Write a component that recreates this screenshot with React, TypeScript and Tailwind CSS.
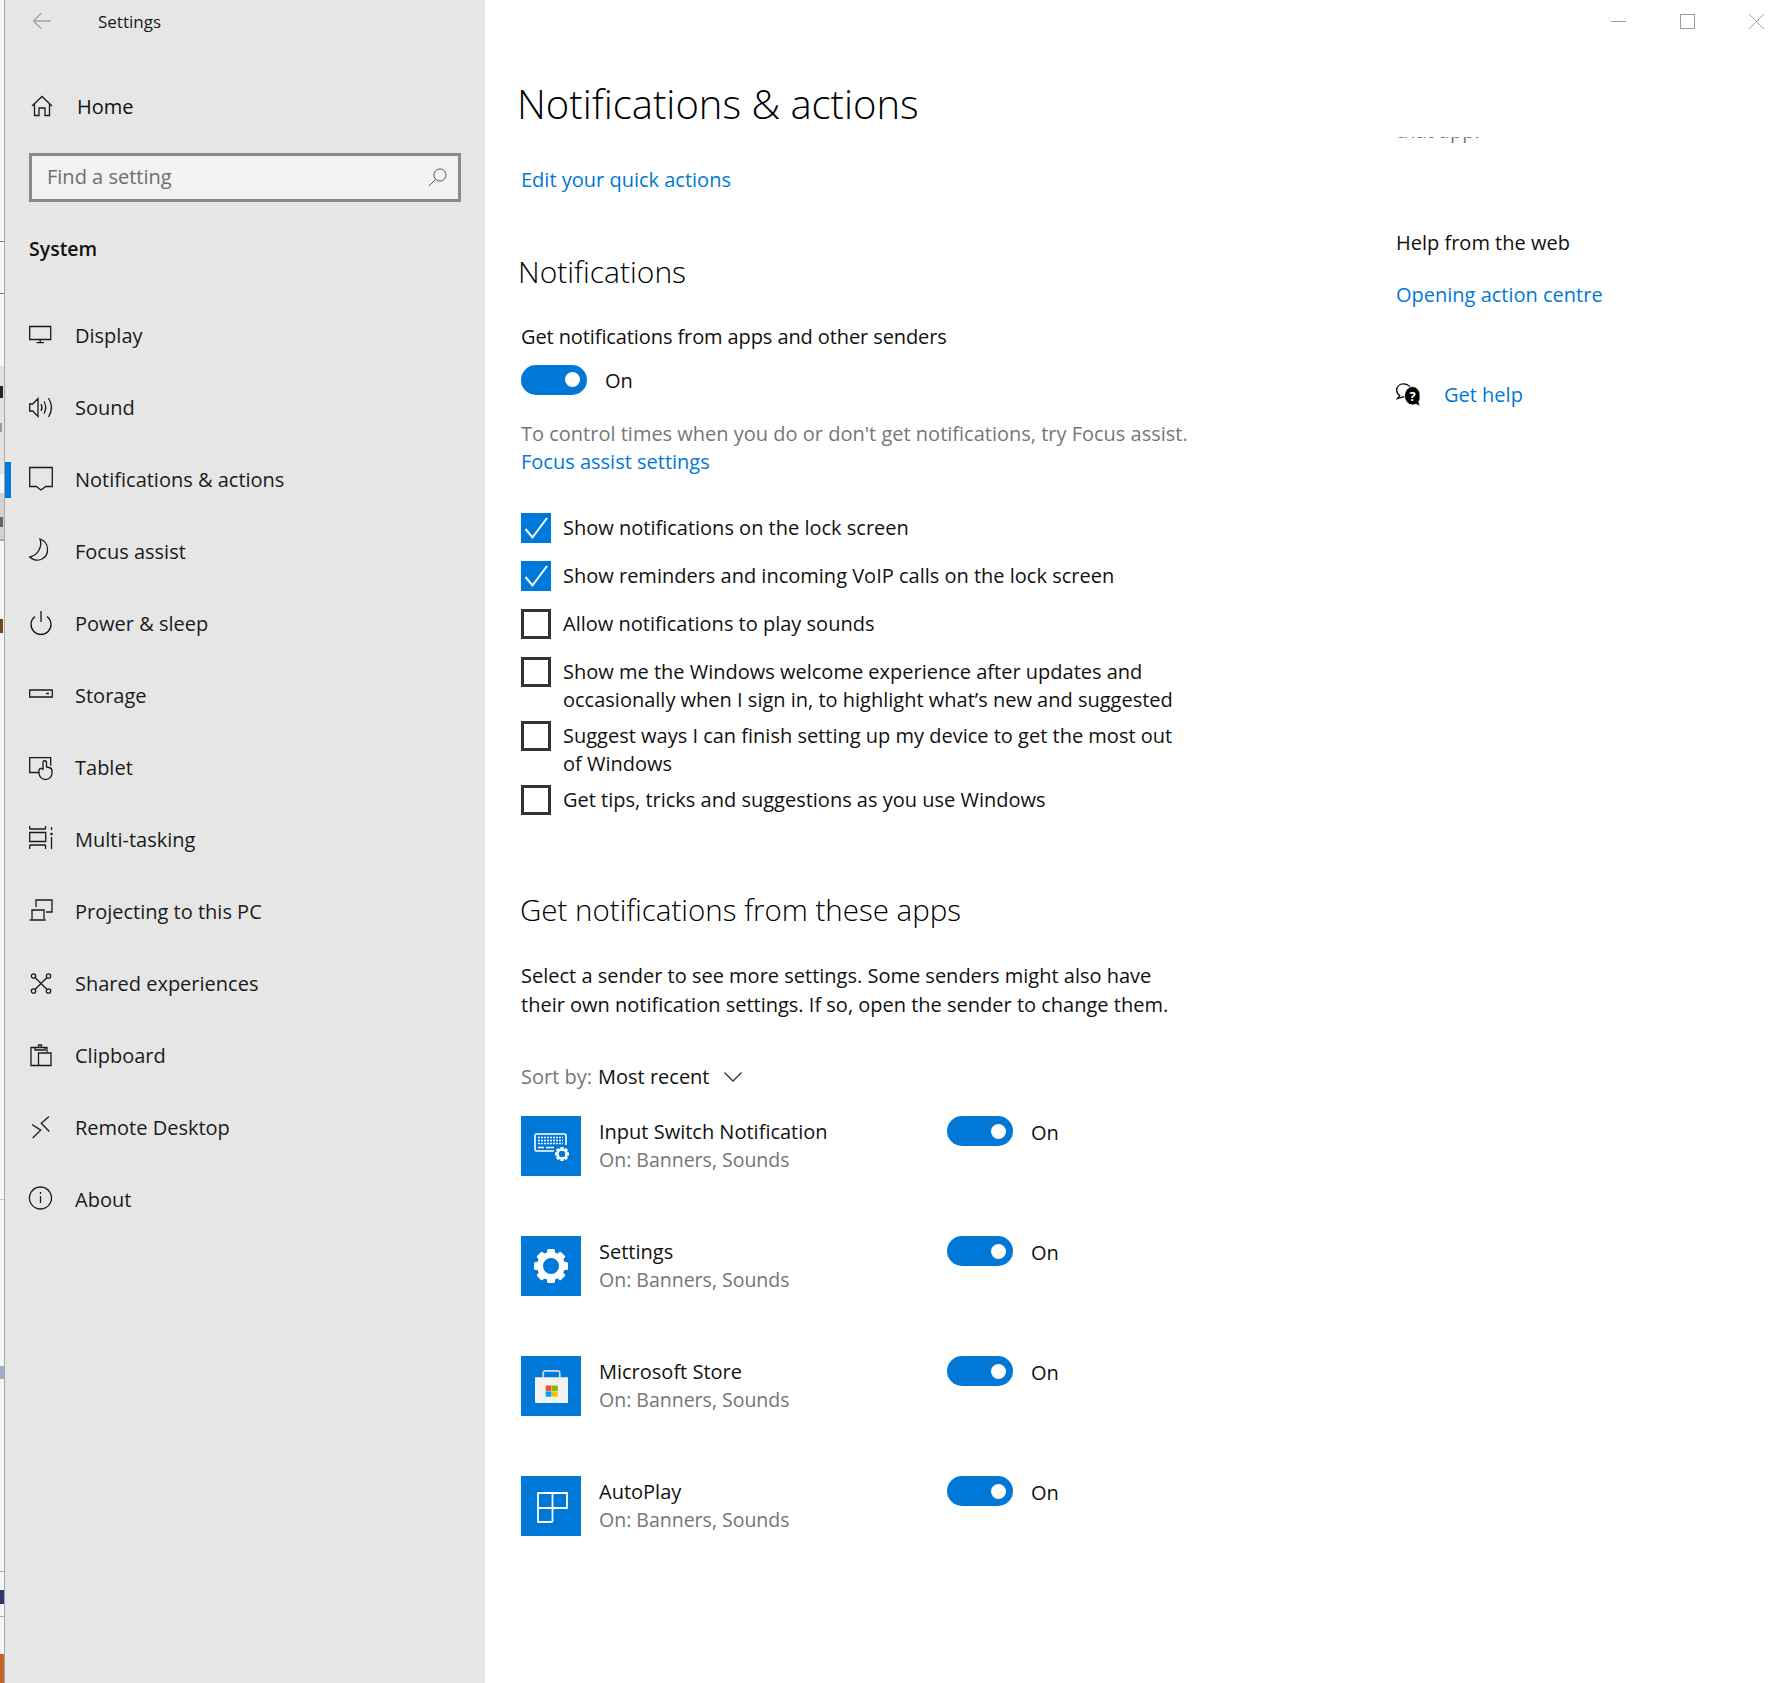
const font = "font-['Open_Sans','Noto_Sans',sans-serif]";

const navItems = [
    { label: 'Display', icon: 'display' },
    { label: 'Sound', icon: 'sound' },
    { label: 'Notifications & actions', icon: 'notify', active: true },
    { label: 'Focus assist', icon: 'focus' },
    { label: 'Power & sleep', icon: 'power' },
    { label: 'Storage', icon: 'storage' },
    { label: 'Tablet', icon: 'tablet' },
    { label: 'Multi-tasking', icon: 'multi' },
    { label: 'Projecting to this PC', icon: 'project' },
    { label: 'Shared experiences', icon: 'shared' },
    { label: 'Clipboard', icon: 'clipboard' },
    { label: 'Remote Desktop', icon: 'remote' },
    { label: 'About', icon: 'about' },
];

const checks = [
    { lines: ['Show notifications on the lock screen'], on: true },
    { lines: ['Show reminders and incoming VoIP calls on the lock screen'], on: true },
    { lines: ['Allow notifications to play sounds'] },
    { lines: ['Show me the Windows welcome experience after updates and', 'occasionally when I sign in, to highlight what\u2019s new and suggested'] },
    { lines: ['Suggest ways I can finish setting up my device to get the most out', 'of Windows'] },
    { lines: ['Get tips, tricks and suggestions as you use Windows'] },
];

const apps = [
    { name: 'Input Switch Notification', kind: 'input' },
    { name: 'Settings', kind: 'settings' },
    { name: 'Microsoft Store', kind: 'store' },
    { name: 'AutoPlay', kind: 'autoplay' },
];

function NavIcon({ name }: { name: string }) {
    return (
        <svg className="w-6 h-6 shrink-0 mb-[5px] overflow-visible" viewBox="0 0 24 24" fill="none" stroke="#1a1a1a" strokeWidth={1.3}>
            {name === 'display' && <path d="M.7 4.500h21v13H.7zM11.200 17.500v3M7.500 20.700h7.500" />}
            {name === 'sound' && <path d="M.7 10h3l5.300-5.500v18L3.700 17H.7zM12 10a7 7 0 0 1 0 7M15 7.500a12 12 0 0 1 0 12M19.500 4a18 18 0 0 1 0 19" />}
            {name === 'notify' && <path d="M.7 1.500h22.600v19h-6.500l-4.800 3.500-4.800-3.500H.7z" />}
            {name === 'focus' && <path d="M11 1a11 11 0 0 1 1 20.500A11 11 0 0 1 .8 19 A14 14 0 0 0 11 1z" />}
            {name === 'power' && <path d="M6 6.500a10 10 0 1 0 12 0M12 1v11" />}
            {name === 'storage' && <path d="M.7 8h22.600v7H.7zM17 11.500h3" />}
            {name === 'tablet' && (
                <g transform="translate(0 3)">
                    <path d="M10 15.500H.7V.7h21v8" />
                    <path d="M14 11V5.500a1.700 1.700 0 0 1 3.500 0V10l2.500.5a3.500 3.500 0 0 1 3 3.500v2a6.500 6.500 0 0 1-13 0V14a2 2 0 0 1 4-1z" />
                </g>
            )}
            {name === 'multi' && (
                <>
                    <path d="M.7 3h16M.7 0v3M16.500 0v3M.7 6.500h16v9H.7zM.7 19h16M.7 19v4M16.500 19v4M22.500 1v3M22.500 11v12" />
                    <circle cx="22.500" cy="8" r="1.300" fill="#1a1a1a" stroke="none" />
                </>
            )}
            {name === 'project' && <path d="M7 9V2h16v12H17M3 21V12h12v9M.7 22h16" />}
            {name === 'shared' && (
                <>
                    <path d="M6 7.500L18 19.500M18 7.500L6 19.500" />
                    <circle cx="4.500" cy="6" r="2.200" />
                    <circle cx="19.500" cy="6" r="2.200" />
                    <circle cx="4.500" cy="21" r="2.200" />
                    <circle cx="19.500" cy="21" r="2.200" />
                </>
            )}
            {name === 'clipboard' && <path d="M9 23.500H2V5.500h16V10M6 8V5.500h3.500V3h3v2.500H16V8zM9.500 11H22v12.500H9.500z" />}
            {name === 'remote' && <path d="M3 10.500l8.700 5.700-8 7.800M20 2.500l-7.700 6.700 8 8.300" />}
            {name === 'about' && <path d="M11.500 1a11 11 0 1 1-.1 0zM11.500 10v7M11.500 6v2" />}
        </svg>
    );
}

function Gear({ className }: { className: string }) {
    return (
        <svg className={className} viewBox="0 0 34 34" fill="white">
            <circle cx="17" cy="17" r="11" fill="none" stroke="white" strokeWidth={6} />
            {[0, 45, 90, 135, 180, 225, 270, 315].map((a) => (
                <rect key={a} x="13" y="0" width="8" height="7" rx="1.500" transform={`rotate(${a} 17 17)`} />
            ))}
        </svg>
    );
}

function Toggle() {
    return (
        <div className="flex items-center justify-end w-[66px] h-[30px] rounded-full bg-[#0078d7] pr-[7px] shrink-0">
            <div className="w-[15px] h-[15px] rounded-full bg-white" />
        </div>
    );
}

function CheckRow({ lines, on }: { lines: string[]; on?: boolean }) {
    return (
        <div className={`flex items-start gap-[12px] ${lines.length > 1 ? 'mb-[7px]' : 'mb-[18px]'}`}>
            {on ? (
                <div className="w-[30px] h-[30px] bg-[#0078d7] flex items-center justify-center shrink-0">
                    <svg className="w-[24px] h-[24px]" viewBox="0 0 24 24" fill="none" stroke="white" strokeWidth={2}>
                        <path d="M1.500 13l7 8.500L23 2" />
                    </svg>
                </div>
            ) : (
                <div className="w-[30px] h-[30px] border-[3px] border-[#333333] shrink-0" />
            )}
            <div className="text-[20px] leading-[28px] mt-px whitespace-nowrap text-[#111]">
                {lines.map((l) => (
                    <div key={l}>{l}</div>
                ))}
            </div>
        </div>
    );
}

function AppIcon({ kind }: { kind: string }) {
    return (
        <div className="w-[60px] h-[60px] bg-[#0078d7] flex items-center justify-center shrink-0 relative">
            {kind === 'input' && (
                <>
                    <svg className="absolute left-[13px] top-[17px] w-[33px] h-[20px]" viewBox="0 0 33 20" fill="none" stroke="white" strokeWidth={1.600}>
                        <path d="M30 18H2.500A1.500 1.500 0 0 1 1 16.500V2.500A1.500 1.500 0 0 1 2.500 1h28A1.500 1.500 0 0 1 32 2.500V12" />
                        <path d="M4 4.500h25M4 7.500h25M4 10.500h25" strokeDasharray="2 1" />
                        <path d="M4 14.500h6M12 14.500h11" />
                    </svg>
                    <div className="absolute left-[33px] top-[30px] w-[16px] h-[16px] bg-[#0078d7] flex items-center justify-center">
                        <Gear className="w-[14px] h-[14px]" />
                    </div>
                </>
            )}
            {kind === 'settings' && <Gear className="w-[34px] h-[34px]" />}
            {kind === 'store' && (
                <svg className="w-[33px] h-[33px]" viewBox="0 0 34 34">
                    <path d="M8.500 8V3a2 2 0 0 1 2-2h13a2 2 0 0 1 2 2v5" fill="none" stroke="#d8d8d8" strokeWidth={1.800} />
                    <path d="M0 7.500h34V33a1 1 0 0 1-1 1H1a1 1 0 0 1-1-1z" fill="#f2f2f2" />
                    <rect x="11" y="16" width="6" height="5.500" fill="#f25022" />
                    <rect x="17.500" y="16" width="6" height="5.500" fill="#7fba00" />
                    <rect x="11" y="22" width="6" height="5.500" fill="#00a4ef" />
                    <rect x="17.500" y="22" width="6" height="5.500" fill="#ffb900" />
                </svg>
            )}
            {kind === 'autoplay' && (
                <svg className="w-[31px] h-[31px] ml-[3px] mt-[2px]" viewBox="0 0 31 31" fill="none" stroke="white" strokeWidth={1.800}>
                    <path d="M1 1h29v15H1zM15.500 1v29M1 16v14h14.500" />
                </svg>
            )}
        </div>
    );
}

export default function App() {
    return (
        <div className={`${font} flex w-[1786px] h-[1683px] overflow-hidden bg-white text-[#111]`}>
            {/* sliver of the window behind */}
            <div className="w-[5px] h-full flex flex-col border-r border-[#a6a6a6] bg-[#f6f6f6] shrink-0">
                <div className="h-[241px]" />
                <div className="h-px bg-[#808080]" />
                <div className="h-[51px]" />
                <div className="h-px bg-[#808080]" />
                <div className="h-[72px]" />
                <div className="h-[108px] bg-[#e2e2e2] flex flex-col">
                    <div className="h-[20px]" />
                    <div className="h-[12px] w-[3px] bg-[#222]" />
                    <div className="h-[25px]" />
                    <div className="h-[9px] w-[2px] bg-[#999]" />
                </div>
                <div className="h-[19px]" />
                <div className="h-[48px] bg-[#d2d2d2] border-b-2 border-[#aaa] flex flex-col">
                    <div className="h-[24px]" />
                    <div className="h-[10px] w-[3px] bg-[#666]" />
                </div>
                <div className="h-[78px]" />
                <div className="h-[14px] w-[3px] bg-[#6b4a20]" />
                <div className="h-[566px]" />
                <div className="h-px bg-[#c8c8c8]" />
                <div className="h-[166px]" />
                <div className="h-[13px] w-[4px] bg-[#9bb0c4]" />
                <div className="h-[192px]" />
                <div className="h-px bg-[#b0b0b0]" />
                <div className="h-[18px]" />
                <div className="h-[14px] w-[4px] bg-[#2b3a6b]" />
                <div className="h-[12px]" />
                <div className="h-px bg-[#b0b0b0]" />
                <div className="flex-1" />
                <div className="h-[29px] bg-[#c8602c]" />
            </div>

            {/* sidebar */}
            <div className="w-[480px] h-full bg-[#e6e6e6] shrink-0 flex flex-col">
                <div className="h-[44px] flex items-center">
                    <svg className="ml-[27px] mb-[2px] w-[20px] h-[18px]" viewBox="0 0 20 18" fill="none" stroke="#a0a0a0" strokeWidth={1.300}>
                        <path d="M19 9H1.500M9 1.500L1.500 9 9 16.500" />
                    </svg>
                    <span className="ml-[46px] text-[17px] text-[#1a1a1a]">Settings</span>
                </div>
                <div className="mt-[36px] h-[54px] flex items-center">
                    <svg className="ml-[26px] w-[22px] h-[22px] mb-[3px]" viewBox="0 0 22 22" fill="none" stroke="#1a1a1a" strokeWidth={1.300}>
                        <path d="M1 11L11 1.500 21 11M3.500 9v11.500H8V13h6v7.500h4.500V9" />
                    </svg>
                    <span className="ml-[24px] text-[20px]">Home</span>
                </div>
                <div className="mt-[19px] ml-[24px] w-[432px] h-[49px] border-[3px] border-[#8a8a8a] bg-[#f2f2f2] flex items-center justify-between pl-[15px] pr-[11px]">
                    <span className="text-[20px] text-[#6e6e6e] mb-px">Find a setting</span>
                    <svg className="w-[19px] h-[19px]" viewBox="0 0 19 19" fill="none" stroke="#555" strokeWidth={1}>
                        <path d="M12 1a6 6 0 1 1-.1 0zM7.500 11.500L1 18" />
                    </svg>
                </div>
                <div className="mt-[33px] ml-[24px] h-[28px] leading-[28px] text-[19.500px] font-semibold">System</div>
                <div className="mt-[37px] flex flex-col">
                    {navItems.map((item) => (
                        <div key={item.label} className="flex items-center h-[72px]">
                            <div className={`w-[6px] h-[36px] shrink-0 ${item.active ? 'bg-[#0078d7]' : ''}`} />
                            <div className="ml-[18px] w-[46px] shrink-0 flex">
                                <NavIcon name={item.icon} />
                            </div>
                            <span className="text-[20px] text-[#1a1a1a]">{item.label}</span>
                        </div>
                    ))}
                </div>
            </div>

            {/* content */}
            <div className="flex-1 flex flex-col">
                <div className="h-[42px] flex items-center justify-end pr-[22px] gap-[54px]">
                    <div className="w-[15px] h-px bg-[#999]" />
                    <div className="w-[15px] h-[15px] border border-[#999]" />
                    <svg className="w-[15px] h-[15px]" viewBox="0 0 15 15" stroke="#999" strokeWidth={0.900}>
                        <path d="M0 0l15 15M15 0L0 15" />
                    </svg>
                </div>
                <div className="flex flex-1">
                    <div className="w-[876px] pl-[36px]">
                        <h1 className="mt-[37px] -ml-[4px] text-[40px] leading-[50px] font-[350] text-black whitespace-nowrap">Notifications &amp; actions</h1>
                        <a className="block mt-[37px] text-[20px] leading-[28px] text-[#0078d7]">Edit your quick actions</a>
                        <h2 className="mt-[58px] -ml-[3px] text-[30px] leading-[40px] font-[350] text-black">Notifications</h2>
                        <p className="mt-[31px] text-[20px] leading-[28px] tracking-[-0.1px]">Get notifications from apps and other senders</p>
                        <div className="mt-[12px] flex items-center gap-[18px]">
                            <Toggle />
                            <span className="text-[20px] mt-[3px]">On</span>
                        </div>
                        <p className="mt-[24px] text-[20px] leading-[28px] text-[#767676] whitespace-nowrap">To control times when you do or don't get notifications, try Focus assist.</p>
                        <a className="block text-[20px] leading-[28px] text-[#0078d7]">Focus assist settings</a>
                        <div className="mt-[37px]">
                            {checks.map((c) => (
                                <CheckRow key={c.lines[0]} lines={c.lines} on={c.on} />
                            ))}
                        </div>
                        <h2 className="mt-[73px] -ml-[1px] text-[29.500px] leading-[44px] font-[350] text-black whitespace-nowrap">Get notifications from these apps</h2>
                        <p className="mt-[29px] text-[20px] leading-[29px] whitespace-nowrap">Select a sender to see more settings. Some senders might also have<br />their own notification settings. If so, open the sender to change them.</p>
                        <div className="mt-[44px] h-[28px] flex items-center text-[20px]">
                            <span className="text-[#767676]">Sort by:</span>
                            <span className="ml-[6px]">Most recent</span>
                            <svg className="ml-[14px] w-[18px] h-[10px]" viewBox="0 0 18 10" fill="none" stroke="#333" strokeWidth={1.300}>
                                <path d="M.5 .5L9 9l8.500-8.500" />
                            </svg>
                        </div>
                        <div className="mt-[25px] flex flex-col gap-[60px]">
                            {apps.map((a) => (
                                <div key={a.name} className="flex">
                                    <AppIcon kind={a.kind} />
                                    <div className="ml-[18px] w-[348px]">
                                        <div className="text-[20px] leading-[28px] mt-[2px]">{a.name}</div>
                                        <div className="text-[19.500px] leading-[28px] text-[#767676]">On: Banners, Sounds</div>
                                    </div>
                                    <Toggle />
                                    <span className="ml-[18px] text-[20px] mt-[2px]">On</span>
                                </div>
                            ))}
                        </div>
                    </div>
                    <div className="flex-1 flex flex-col pl-[35px]">
                        {/* last line of the text above, scrolled away under the page title */}
                        <div className="mt-[95px] h-[9px] overflow-hidden">
                            <div className="-mt-[20px] text-[20px] leading-[28px] text-[#767676]">that app.</div>
                        </div>
                        <p className="mt-[83px] text-[20px] leading-[28px]">Help from the web</p>
                        <a className="block mt-[24px] text-[20px] leading-[28px] text-[#0078d7]">Opening action centre</a>
                        <div className="mt-[71px] flex items-center gap-[24px]">
                            <svg className="w-[24px] h-[24px] mb-px" viewBox="0 0 24 24">
                                <path d="M7.500 .8C3.500 .8 .7 3.500 .7 7.300c0 2.200 1.200 4 3 5.200L1.500 15.500l5.500-1.700c3.500 .4 7.500-1.500 8-5.800C15.500 4 12 .8 7.500 .8z" fill="#fff" stroke="#000" strokeWidth={1.300} />
                                <path d="M16.500 3.500a7.500 8.700 0 0 0 0 18.500c1.300 0 2.500-.3 3.500-.8l4 2.300-1.200-4.500a8.700 8.700 0 0 0 1.200-5.700 7.500 8.700 0 0 0-7.500-9.800z" fill="#000" stroke="#fff" strokeWidth={0.800} />
                                <text x="16.500" y="18" textAnchor="middle" fontSize="13" fontWeight="700" fill="#fff">?</text>
                            </svg>
                            <a className="text-[20px] text-[#0078d7]">Get help</a>
                        </div>
                    </div>
                </div>
            </div>
        </div>
    );
}
